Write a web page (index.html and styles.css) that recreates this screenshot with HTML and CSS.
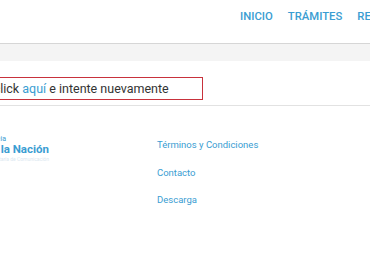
FILE: index.html
```html
<!DOCTYPE html>
<html lang="es">
<head>
    <meta charset="UTF-8">
    <meta name="viewport" content="width=device-width, initial-scale=1.0">
    <title>Error</title>
    <link rel="stylesheet" href="styles.css">
</head>
<body>
    <header class="header">
        <nav class="nav">
            <a href="#">INICIO</a>
            <a href="#">TRÁMITES</a>
            <a href="#">REQUISITOS</a>
        </nav>
    </header>
    <div class="band"></div>

    <main class="content">
        <div class="alert">
            Haga click <a href="#">aquí</a> e intente nuevamente
        </div>
    </main>

    <footer class="footer">
        <div class="logo">
            <span class="logo-top">Presidencia</span>
            <span class="logo-main">de la Nación</span>
            <span class="logo-sub">Secretaría de Comunicación</span>
        </div>
        <ul class="links">
            <li><a href="#">Términos y Condiciones</a></li>
            <li><a href="#">Contacto</a></li>
            <li><a href="#">Descarga</a></li>
        </ul>
    </footer>
</body>
</html>
```

FILE: styles.css
```css
body {
    margin: 0;
    font-family: Roboto, "Liberation Sans", sans-serif;
    background: #fff;
    overflow: hidden;
    width: 370px;
    height: 260px;
}
a {
    text-decoration: none;
}
.header {
    height: 43px;
    background: #fff;
    border-bottom: 1px solid #d6d6d6;
    box-shadow: 0 1px 2px rgba(0, 0, 0, 0.12);
    display: flex;
    white-space: nowrap;
}
.nav {
    display: flex;
    gap: 15px;
    margin-left: 240px;
    padding-top: 10px;
}
.nav a {
    color: #3a9dd2;
    font-size: 11.3px;
    font-weight: 500;
    line-height: 14px;
}
.band {
    height: 17px;
    background: #f4f4f4;
}
.content {
    padding: 16px 0 5px;
    border-bottom: 1px solid #e2e2e2;
}
.alert {
    width: 243px;
    margin-left: -40px;
    padding: 4px 0 3px 0;
    border: 1.5px solid #c8323c;
    font-size: 12.5px;
    line-height: 14px;
    color: #333;
    box-sizing: border-box;
}
.alert a {
    color: #3a9dd2;
}
.footer {
    display: flex;
    padding-top: 26px;
}
.logo {
    display: flex;
    flex-direction: column;
    width: 157px;
    margin-left: -48px;
    align-items: flex-end;
    padding: 3px 60px 0 0;
    box-sizing: border-box;
    white-space: nowrap;
}
.logo-top {
    font-size: 7px;
    color: #3a9dd2;
    line-height: 8px;
    margin-right: 43px;
}
.logo-main {
    font-size: 11.5px;
    font-weight: 700;
    color: #3a9dd2;
    line-height: 13px;
}
.logo-sub {
    font-size: 5px;
    color: #dbe8f0;
    line-height: 7px;
}
.links {
    list-style: none;
    margin: 0;
    padding: 7px 0 0 48px;
    display: flex;
    flex-direction: column;
    gap: 16.5px;
}
.links a {
    color: #3a9dd2;
    font-size: 9.5px;
    line-height: 11px;
    display: block;
}
```
